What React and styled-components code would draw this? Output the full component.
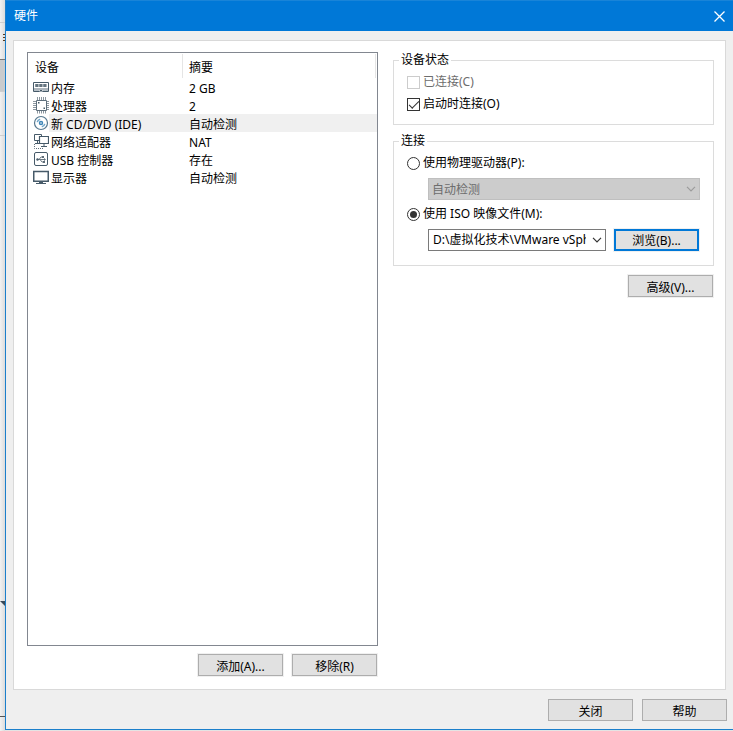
import React from "react";
import styled, { createGlobalStyle, css } from "styled-components";

const GlobalStyle = createGlobalStyle`
  *, *::before, *::after { box-sizing: border-box; }
  body {
    margin: 0;
    background: #e4e4e4;
    color: #000;
    font: 12px/16px "Noto Sans", "Noto Sans CJK SC", sans-serif;
  }
  button, select, input { font: inherit; color: inherit; margin: 0; }
`;

const Screen = styled.div`
  display: flex;
  min-height: 100vh;
  overflow: hidden;
`;

const Backdrop = styled.div`
  display: flex;
  flex-direction: column;
  flex: none;
  width: 5px;
  background: linear-gradient(to right, #f2f2f2, #dcdcdc);
`;

const BackdropBand = styled.div`
  flex: ${(p) => (p.$grow ? `${p.$grow} 1 0` : "none")};
  height: ${(p) => (p.$height ? `${p.$height}px` : "auto")};
  border-bottom: 1px solid ${(p) => p.$line || "#cfcfcf"};
  background: ${(p) => p.$fill || "transparent"};
  svg { display: block; }
`;

const Dialog = styled.main`
  display: flex;
  flex-direction: column;
  flex: 1;
  min-width: 0;
  margin-bottom: 1px;
  border-left: 1px solid #1b7fcb;
  border-bottom: 1px solid #1b7fcb;
  background: #efefef;
`;

const TitleBar = styled.header`
  display: flex;
  align-items: center;
  justify-content: space-between;
  height: 31px;
  padding-left: 8px;
  background: #0078d7;
  border-top: 1px solid #1984d8;
  color: #fff;
`;

const Title = styled.h1`
  margin: 0;
  font-size: 12px;
  font-weight: 400;
`;

const CloseButton = styled.button`
  display: grid;
  place-items: center;
  width: 27px;
  height: 29px;
  padding: 0;
  border: 0;
  background: transparent;
`;

const Panel = styled.section`
  display: flex;
  flex: 1;
  gap: 15px;
  margin: 9px 7px 0;
  padding: 11px 11px 13px 13px;
  border: 1px solid #d9d9d9;
  background: #fff;
`;

const DeviceColumn = styled.div`
  display: flex;
  flex-direction: column;
  flex: 351 1 0;
  min-width: 0;
`;

const SettingsColumn = styled.div`
  display: flex;
  flex-direction: column;
  flex: 321 1 0;
  min-width: 0;
`;

const DeviceList = styled.div`
  flex: 1;
  border: 1px solid #828790;
`;

const DeviceTable = styled.table`
  width: 100%;
  border-collapse: separate;
  border-spacing: 0;
  table-layout: fixed;
`;

const HeaderCell = styled.th`
  height: 25px;
  padding: 4px 0 0 ${(p) => p.$indent}px;
  background: linear-gradient(#e5e5e5, #e5e5e5) right 1px top 1px / 1px 24px no-repeat;
  font-weight: 400;
  text-align: left;
`;

const DeviceRow = styled.tr`
  height: 18px;
  td + td { background: ${(p) => (p.$selected ? "#f0f0f0" : "transparent")}; }
`;

const Cell = styled.td`
  padding: 4px 0 0 ${(p) => p.$indent}px;
  line-height: 14px;
  white-space: nowrap;
`;

const IconCell = styled.td`
  padding: 0 0 0 5px;
  svg { display: block; }
`;

const ButtonRow = styled.div`
  display: flex;
  justify-content: flex-end;
  gap: 9px;
  padding: ${(p) => p.$pad};
`;

const PushButton = styled.button`
  flex: none;
  width: 85px;
  height: 22px;
  padding: 3px 0 0;
  border: 1px solid #adadad;
  background: #e1e1e1;
  line-height: 16px;
  ${(p) => p.$halo && css`box-shadow: 0 0 0 1px #f0f0f0;`}
  ${(p) => p.$focused && css`
    border: 2px solid #0078d7;
    padding-top: 1px;
  `}
`;

const Group = styled.fieldset`
  min-width: 0;
  margin: 0 0 8px;
  padding: 3px 13px ${(p) => p.$bottom}px;
  border: 1px solid #dcdcdc;
`;

const Legend = styled.legend`
  margin-left: -8px;
  padding: 0 2px;
  line-height: 16px;
`;

const Choice = styled.label`
  display: flex;
  align-items: center;
  gap: 3px;
  height: 22px;
  color: ${(p) => (p.$disabled ? "#6d6d6d" : "#000")};
`;

const Tick = styled.input`
  appearance: none;
  display: grid;
  place-items: center;
  width: 13px;
  height: 13px;
  border: 1px solid ${(p) => (p.disabled ? "#cccccc" : "#333")};
  background: #fff;
  &:checked::after {
    content: "";
    width: 10px;
    height: 5px;
    border: solid #333;
    border-width: 0 0 1px 1px;
    transform: translateY(-1px) rotate(-45deg);
  }
`;

const Radio = styled.input`
  appearance: none;
  display: grid;
  place-items: center;
  width: 13px;
  height: 13px;
  border: 1px solid #333;
  border-radius: 50%;
  background: #fff;
  &:checked::after {
    content: "";
    width: 7px;
    height: 7px;
    border-radius: 50%;
    background: #333;
  }
`;

const FieldRow = styled.div`
  display: flex;
  align-items: center;
  gap: 8px;
  margin: 4px 0 3px;
  padding: 0 ${(p) => p.$end || 0}px 0 21px;
`;

const ComboBox = styled.div`
  position: relative;
  flex: 1;
  min-width: 0;
  svg {
    position: absolute;
    right: 4px;
    top: 8px;
    pointer-events: none;
  }
`;

const Select = styled.select`
  appearance: none;
  display: block;
  width: 100%;
  height: 22px;
  padding: 0 19px 0 4px;
  border: 1px solid #7a7a7a;
  border-radius: 0;
  background: #fff;
  text-overflow: clip;
  &:disabled {
    padding: 2px 19px 0 3px;
    border-color: #bfbfbf;
    background: #ccc;
    color: #6d6d6d;
    opacity: 1;
  }
`;

const Chevron = ({ color }) => (
  <svg width="10" height="6" viewBox="0 0 10 6" fill="none" stroke={color} strokeWidth="1.200" aria-hidden="true">
    <path d="M1 .8l4 4 4-4" />
  </svg>
);

const INK = "#465a69";

const Glyph = ({ children }) => (
  <svg width="16" height="18" viewBox="0 0 16 18" fill="none" stroke={INK} aria-hidden="true">
    {children}
  </svg>
);

const icons = {
  memory: (
    <Glyph>
      <path d="M.5 4.500h15v9H.5z" fill="#fff" />
      <path d="M2 6h12v3H2z" fill="#a9b3ba" stroke="none" />
      <path d="M2.500 6h2.500v3H2.500zM6.500 6H9v3H6.500zM10.500 6H13v3h-2.500z" fill="#65747f" stroke="none" />
      <path d="M1 11h14" stroke="#5c6d7a" />
      <path d="M1 12.500h5M10 12.500h5" stroke="#b6c0c7" />
      <path d="M6 13.500l1-1h2l1 1" fill="#fff" />
    </Glyph>
  ),
  processor: (
    <Glyph>
      <path d="M3.500 4.500h10v10h-10z" fill="#fff" stroke="#5e6f7c" />
      <path d="M4.500 1v3M6.500 1v3M8.500 1v3M10.500 1v3M12.500 1v3M4.500 15v2.500M6.500 15v2.500M8.500 15v2.500M10.500 15v2.500M12.500 15v2.500M0 5.500h3M0 7.500h3M0 9.500h3M0 11.500h3M0 13.500h3M14 5.500h2M14 7.500h2M14 9.500h2M14 11.500h2M14 13.500h2" stroke="#8b969f" />
      <path d="M5 6h1.500v1.500H5zM10.500 11.500H12V13h-1.500z" fill={INK} stroke="none" />
    </Glyph>
  ),
  disc: (
    <Glyph>
      <circle cx="8" cy="9" r="6.500" fill="#fff" stroke="#56788f" strokeWidth="1.200" />
      <circle cx="8" cy="9" r="1.500" stroke="#3f86b8" strokeWidth="1.500" />
      <path d="M4.200 8.200A4 4 0 0 1 7.200 5.200M11.800 9.800A4 4 0 0 1 8.800 12.800" stroke="#6fa5c8" strokeWidth="1.500" />
    </Glyph>
  ),
  network: (
    <Glyph>
      <path d="M1.500 2.500h7v6h-7zM4.500 9v2M2 11.500h5" />
      <path d="M6.500 4.500h9v7h-9z" fill="#fff" strokeWidth="1.200" />
      <path d="M11 12v2M8 14.500h6" />
      <path d="M1.500 12v4.500H11" strokeDasharray="1 1" stroke="#5f6d78" />
    </Glyph>
  ),
  usb: (
    <Glyph>
      <rect x="1.500" y="2.500" width="13" height="13" rx="1.500" fill="#fff" />
      <path d="M4 9.500h8M6 9.500l2-2.500h2M7 9.500l2 2.500h2" stroke="#6b7882" />
      <circle cx="4.500" cy="9.500" r="1.200" fill={INK} stroke="none" />
      <path d="M11 8l2 1.500-2 1.500zM9 6h2v2H9zM10 11h2v2h-2z" fill="#5d6c78" stroke="none" />
    </Glyph>
  ),
  display: (
    <Glyph>
      <path d="M.75 3.500h14.500v9.750H.75z" fill="#fff" strokeWidth="1.500" />
      <path d="M3 15.500h10" />
      <path d="M6 14.500h4" />
    </Glyph>
  ),
};

const devices = [
  { icon: "memory", name: "内存", summary: "2 GB" },
  { icon: "processor", name: "处理器", summary: "2" },
  { icon: "disc", name: "新 CD/DVD (IDE)", summary: "自动检测", selected: true },
  { icon: "network", name: "网络适配器", summary: "NAT" },
  { icon: "usb", name: "USB 控制器", summary: "存在" },
  { icon: "display", name: "显示器", summary: "自动检测" },
];

const IconColumn = styled.col`
  width: 21px;
`;

const NameColumn = styled.col`
  width: 135px;
`;

function Devices() {
  return (
    <DeviceColumn>
      <DeviceList>
        <DeviceTable>
          <colgroup>
            <IconColumn />
            <NameColumn />
            <col />
          </colgroup>
          <thead>
            <tr>
              <HeaderCell colSpan={2} $indent={7}>设备</HeaderCell>
              <HeaderCell $indent={5}>摘要</HeaderCell>
            </tr>
          </thead>
          <tbody>
            {devices.map((d) => (
              <DeviceRow key={d.icon} $selected={d.selected}>
                <IconCell>{icons[d.icon]}</IconCell>
                <Cell $indent={2}>{d.name}</Cell>
                <Cell $indent={5}>{d.summary}</Cell>
              </DeviceRow>
            ))}
          </tbody>
        </DeviceTable>
      </DeviceList>
      <ButtonRow $pad="8px 1px 0 0">
        <PushButton $halo>添加(A)...</PushButton>
        <PushButton $halo>移除(R)</PushButton>
      </ButtonRow>
    </DeviceColumn>
  );
}

function Settings() {
  return (
    <SettingsColumn>
      <Group $bottom={9}>
        <Legend>设备状态</Legend>
        <Choice $disabled>
          <Tick type="checkbox" disabled />
          已连接(C)
        </Choice>
        <Choice>
          <Tick type="checkbox" defaultChecked />
          启动时连接(O)
        </Choice>
      </Group>
      <Group $bottom={11}>
        <Legend>连接</Legend>
        <Choice>
          <Radio type="radio" name="source" />
          使用物理驱动器(P):
        </Choice>
        <FieldRow>
          <ComboBox>
            <Select disabled aria-label="物理驱动器">
              <option>自动检测</option>
            </Select>
            <Chevron color="#9c9c9c" />
          </ComboBox>
        </FieldRow>
        <Choice>
          <Radio type="radio" name="source" defaultChecked />
          使用 ISO 映像文件(M):
        </Choice>
        <FieldRow $end={1}>
          <ComboBox>
            <Select aria-label="ISO 映像文件">
              <option>D:\虚拟化技术\VMware vSphere</option>
            </Select>
            <Chevron color="#333" />
          </ComboBox>
          <PushButton $halo $focused>浏览(B)...</PushButton>
        </FieldRow>
      </Group>
      <ButtonRow $pad="1px 1px 0 0">
        <PushButton $halo>高级(V)...</PushButton>
      </ButtonRow>
    </SettingsColumn>
  );
}

export default function App() {
  return (
    <>
      <GlobalStyle />
      <Screen>
        <Backdrop>
          <BackdropBand $height={23} />
          <BackdropBand $height={37} $line="#777">
            <svg width="5" height="24" viewBox="0 0 5 24" stroke="#5a3a1c" aria-hidden="true">
              <path d="M3 11.500h2M3 14.500h2M3 17.500h2" />
            </svg>
          </BackdropBand>
          <BackdropBand $height={32} $fill="#c9cbcd" />
          <BackdropBand $height={44} />
          <BackdropBand $grow={466} $line="transparent" />
          <BackdropBand $grow={115} $line="#555">
            <svg width="5" height="6" viewBox="0 0 5 6" fill="#3c4a58" aria-hidden="true">
              <path d="M0 0h5v5z" />
            </svg>
          </BackdropBand>
          <BackdropBand $height={14} $line="transparent" />
        </Backdrop>
        <Dialog>
          <TitleBar>
            <Title>硬件</Title>
            <CloseButton aria-label="关闭">
              <svg width="11" height="11" viewBox="0 0 11 11" stroke="#fff" strokeWidth="1.300" aria-hidden="true">
                <path d="M.5.5l10 10M10.500.5l-10 10" />
              </svg>
            </CloseButton>
          </TitleBar>
          <Panel>
            <Devices />
            <Settings />
          </Panel>
          <ButtonRow $pad="9px 6px 8px 0">
            <PushButton>关闭</PushButton>
            <PushButton>帮助</PushButton>
          </ButtonRow>
        </Dialog>
      </Screen>
    </>
  );
}
